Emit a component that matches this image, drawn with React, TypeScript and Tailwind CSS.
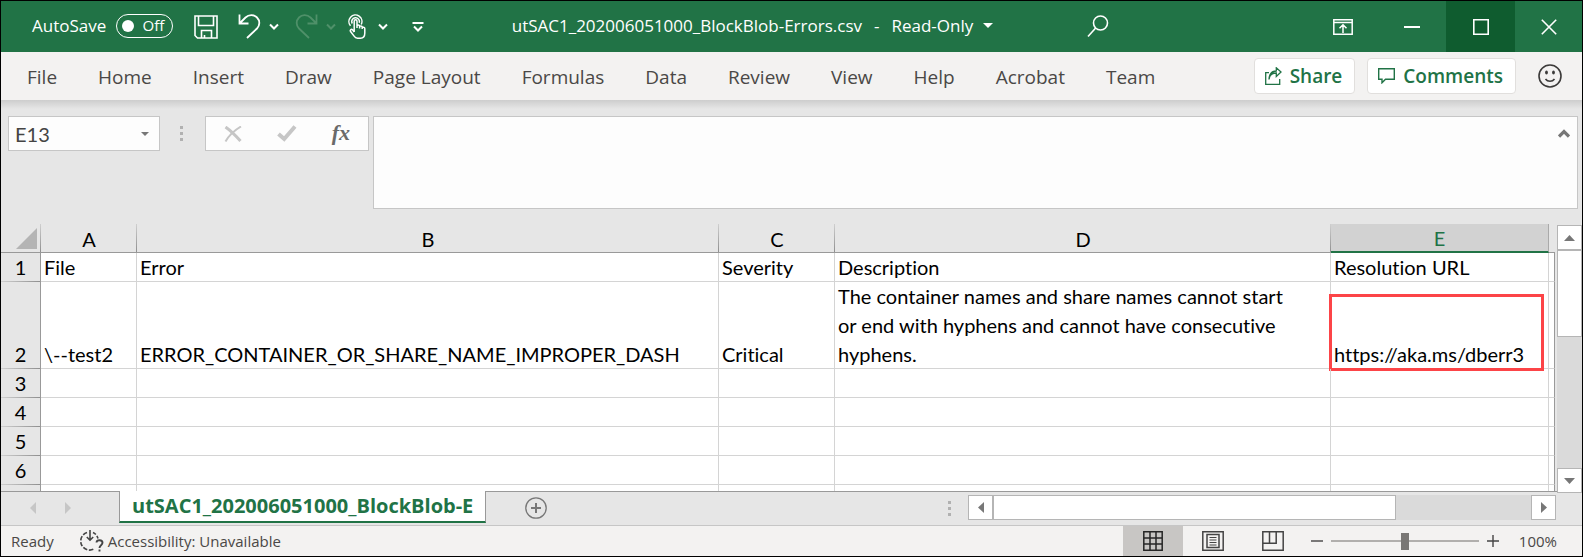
import type { ReactNode } from 'react';

const menuTabs = ['File', 'Home', 'Insert', 'Draw', 'Page Layout', 'Formulas', 'Data', 'Review', 'View', 'Help', 'Acrobat', 'Team'];

const rows = [
  { n: '1', cells: ['File', 'Error', 'Severity', 'Description', 'Resolution URL'] },
  {
    n: '2',
    cells: [
      '\\--test2',
      'ERROR_CONTAINER_OR_SHARE_NAME_IMPROPER_DASH',
      'Critical',
      'The container names and share names cannot start or end with hyphens and cannot have consecutive hyphens.',
      'https://aka.ms/dberr3',
    ],
  },
  { n: '3', cells: ['', '', '', '', ''] },
  { n: '4', cells: ['', '', '', '', ''] },
  { n: '5', cells: ['', '', '', '', ''] },
  { n: '6', cells: ['', '', '', '', ''] },
  { n: '', cells: ['', '', '', '', ''] },
];

function Chevron({ faded = false }: { faded?: boolean }) {
  return (
    <svg width="10" height="8" viewBox="0 0 10 8" fill="none" stroke={faded ? '#4f9069' : '#fff'} strokeWidth="2">
      <path d="M1 1.5l4 4 4-4" />
    </svg>
  );
}

function Dots() {
  return (
    <svg width="3" height="15" viewBox="0 0 3 15" fill="#b1b1b1">
      <path d="M0 0h3v3H0zM0 6h3v3H0zM0 12h3v3H0z" />
    </svg>
  );
}

function WindowButton({ label, className = 'w-[69px]', children }: { label: string; className?: string; children: ReactNode }) {
  return (
    <button aria-label={label} className={`flex items-center justify-center self-stretch ${className}`}>
      {children}
    </button>
  );
}

function TitleBar() {
  return (
    <header className="flex h-[51px] shrink-0 items-center bg-[#217346] text-[17px] text-white">
      <div className="flex flex-1 items-center">
        <div className="flex items-center gap-2.5 pb-0.5 pl-[31px]">
          <span id="autosave">AutoSave</span>
          <button
            role="switch"
            aria-checked="false"
            aria-labelledby="autosave"
            className="flex h-6 w-[57px] items-center justify-between rounded-full border border-white pr-2 pl-[5px] text-[15px]"
          >
            <span className="size-3 rounded-full bg-white" />
            Off
          </button>
        </div>
        <button aria-label="Save" className="ml-[21px]">
          <svg width="24" height="24" viewBox="0 0 24 24" fill="none" stroke="#fff" strokeWidth="1.600">
            <path d="M1 1h22v22H3.500L1 20.500zM4.500 1v9.500h15V1M7.500 23v-7.500h10V23M10.500 23v-3" />
          </svg>
        </button>
        <button aria-label="Undo" className="ml-5">
          <svg width="23" height="25" viewBox="0 0 23 25" fill="none" stroke="#fff" strokeWidth="1.800">
            <path d="M1.500.5v9h9M2 9l5.500-5.500c3.500-3.300 8.500-3 11.500 0 3.200 3.300 3 8 0 11L9 24" />
          </svg>
        </button>
        <button aria-label="Undo history" className="ml-2"><Chevron /></button>
        <button aria-label="Redo" className="ml-4">
          <svg width="23" height="25" viewBox="0 0 23 25" fill="none" stroke="#4f9069" strokeWidth="1.800">
            <path d="M21.500.5v9h-9M21 9l-5.500-5.500c-3.500-3.300-8.500-3-11.500 0-3.200 3.300-3 8 0 11L14 24" />
          </svg>
        </button>
        <button aria-label="Redo history" className="ml-2"><Chevron faded /></button>
        <button aria-label="Touch mode" className="ml-3">
          <svg width="18" height="25" viewBox="0 0 18 25" fill="none" stroke="#fff" strokeWidth="1.500">
            <path d="M2.500 11.800A6.500 6.500 0 1 1 13.200 10.500M4.300 9.500a3.800 3.800 0 1 1 6.900-.8" />
            <path d="M6.200 18V7.300c0-2 2.800-2 2.800 0V14M9 12c0-1.400 2.600-1.400 2.600 0v2.500M11.600 13c0-1.400 2.600-1.300 2.600 0v2M14.200 13.800c.4-1 2.600-.8 2.600.6V19c0 3-1.600 5.200-4.300 5.200H9.500c-1.800 0-2.600-.8-3.600-2.300l-3.500-4.600c-.7-1.500 1-2.600 2.200-1.400L6.200 18" />
          </svg>
        </button>
        <button aria-label="Touch mode options" className="ml-3"><Chevron /></button>
        <button aria-label="Customize Quick Access Toolbar" className="ml-6">
          <svg width="12" height="10" viewBox="0 0 12 10" fill="none" stroke="#fff" strokeWidth="2">
            <path d="M.5 1h11M2 4.500l4 4 4-4" />
          </svg>
        </button>
      </div>
      <div className="flex items-center gap-3 pb-0.5">
        <span>utSAC1_202006051000_BlockBlob-Errors.csv</span>
        <span>-</span>
        <button className="flex items-center gap-2.5">
          Read-Only
          <svg width="10" height="5" viewBox="0 0 10 5" fill="#fff"><path d="M0 0h10L5 5z" /></svg>
        </button>
      </div>
      <div className="flex flex-1 items-center self-stretch pl-[78px]">
        <button aria-label="Search" className="mr-auto ml-4">
          <svg width="22" height="23" viewBox="0 0 22 23" fill="none" stroke="#fff" strokeWidth="1.600">
            <circle cx="13.500" cy="8" r="7" />
            <path d="M8.700 13L1 21.500" />
          </svg>
        </button>
        <WindowButton label="Ribbon Display Options">
          <svg width="20" height="16" viewBox="0 0 20 16" fill="none" stroke="#fff" strokeWidth="1.500">
            <path d="M.8.800h18.400v14.400H.8zM.8 3.500h18.400M10 14V6M6.500 9.200L10 5.700l3.500 3.500" />
          </svg>
        </WindowButton>
        <WindowButton label="Minimize">
          <svg width="16" height="2" viewBox="0 0 16 2" fill="#fff"><path d="M0 0h16v2H0z" /></svg>
        </WindowButton>
        <WindowButton label="Maximize" className="w-[69px] bg-[#0f5c2f]">
          <svg width="16" height="16" viewBox="0 0 16 16" fill="none" stroke="#fff" strokeWidth="1.600"><path d="M.8.800h14.400v14.400H.8z" /></svg>
        </WindowButton>
        <WindowButton label="Close" className="w-[67px]">
          <svg width="16" height="16" viewBox="0 0 16 16" stroke="#fff" strokeWidth="1.600"><path d="M.8.800l14.400 14.400M15.200.800L.8 15.200" /></svg>
        </WindowButton>
      </div>
    </header>
  );
}

function Ribbon() {
  return (
    <nav className="flex h-12 shrink-0 items-center bg-[#f3f2f1] pr-5 pl-[26px] text-[19px] text-[#4a4846]">
      <div className="flex gap-[41px] pt-0.5 whitespace-nowrap">
        {menuTabs.map((t) => (
          <button key={t}>{t}</button>
        ))}
      </div>
      <div className="ml-auto flex items-center gap-3 font-semibold text-[#217346]">
        <button className="flex h-9 items-center gap-2 rounded-sm border border-[#e1dfdd] bg-white pr-3 pl-2.5">
          <svg width="17" height="18" viewBox="0 0 17 18" fill="none" stroke="#217346" strokeWidth="1.300">
            <path d="M4 5.700H.7v11.600h14V12M4 12.500c.3-4.500 3-6.500 7.300-6.500v3.500L16 5l-4.700-4.200V4C6.500 4.200 4.200 7 4 12.500z" />
          </svg>
          Share
        </button>
        <button className="flex h-9 items-center gap-2 rounded-sm border border-[#e1dfdd] bg-white pr-3 pl-2.5">
          <svg width="17" height="16" viewBox="0 0 17 16" fill="none" stroke="#217346" strokeWidth="1.400">
            <path d="M.7.700h15.600v10.600H7.500L4 14.800v-3.500H.7z" />
          </svg>
          Comments
        </button>
        <button aria-label="Feedback" className="ml-2.5">
          <svg width="24" height="24" viewBox="0 0 24 24" fill="none" stroke="#3b3a39" strokeWidth="1.600">
            <circle cx="12" cy="12" r="11" />
            <path d="M7.500 15c2.200 3 6.800 3 9 0" />
            <ellipse cx="8.500" cy="8.500" rx="1.400" ry="2" fill="#3b3a39" stroke="none" />
            <ellipse cx="15.500" cy="8.500" rx="1.400" ry="2" fill="#3b3a39" stroke="none" />
          </svg>
        </button>
      </div>
    </nav>
  );
}

function FormulaBar() {
  return (
    <div className="flex shrink-0 items-start bg-[linear-gradient(to_bottom,#cdcdcd,#e6e6e6_9px)] pt-4 pr-1 pb-[15px] pl-[7px]">
      <div className="flex h-[35px] w-[152px] items-center border border-[#c6c6c6] bg-[#fdfdfd] pr-2.5 pl-1.5">
        <input aria-label="Name Box" defaultValue="E13" className="w-full min-w-0 bg-transparent font-[Lato,sans-serif] text-xl text-[#444] outline-none" />
        <button aria-label="Name Box list">
          <svg width="8" height="4" viewBox="0 0 8 4" fill="#777"><path d="M0 0h8L4 4z" /></svg>
        </button>
      </div>
      <div className="flex h-[35px] w-[43px] items-center justify-center"><Dots /></div>
      <div className="ml-0.5 flex h-[35px] w-[164px] items-center justify-between border border-[#c6c6c6] bg-[#fdfdfd] px-[18px]">
        <button aria-label="Cancel">
          <svg width="18" height="16" viewBox="0 0 18 16" fill="none" stroke="#c6c6c6">
            <path d="M1.500 1c5 3.500 10.500 9 15 14" strokeWidth="3" />
            <path d="M17 .5C11 4 5 9.500 1.500 15.500" strokeWidth="2" />
          </svg>
        </button>
        <button aria-label="Enter">
          <svg width="20" height="17" viewBox="0 0 20 17" fill="none" stroke="#c6c6c6" strokeWidth="4">
            <path d="M1.500 9l5.700 5L18 1.500" />
          </svg>
        </button>
        <button aria-label="Insert Function" className="pb-0.5 font-['Liberation_Serif',serif] text-[22px] leading-6 font-bold text-[#6a6a6a] italic">
          fx
        </button>
      </div>
      <div className="ml-1 flex h-[93px] flex-1 items-start border border-[#c6c6c6] bg-[#fdfdfd]">
        <textarea aria-label="Formula Bar" className="h-full flex-1 resize-none bg-transparent outline-none" />
        <button aria-label="Collapse Formula Bar" className="mt-3 mr-[7px]">
          <svg width="12" height="9" viewBox="0 0 12 9" fill="none" stroke="#777" strokeWidth="3.200"><path d="M1 7.500l5-5 5 5" /></svg>
        </button>
      </div>
    </div>
  );
}

const columnHead = 'bg-[linear-gradient(to_bottom,#cfcfcf,#8f8f8f)] bg-[length:1px_100%] bg-right bg-no-repeat';
const rowHead = 'bg-[linear-gradient(to_right,#d0d0d0,#8f8f8f)] bg-[length:100%_1px] bg-bottom bg-no-repeat';

function Sheet() {
  return (
    <div className="flex min-h-0 flex-1">
      <div className="min-w-0 flex-1 overflow-hidden">
        <table className="w-full table-fixed border-separate border-spacing-0 font-[Lato,sans-serif] text-xl text-black [font-variant-ligatures:none]">
          <colgroup>
            <col className="w-10" />
            <col className="w-24" />
            <col className="w-[582px]" />
            <col className="w-[116px]" />
            <col />
            <col className="w-[218px]" />
            <col className="w-[6px]" />
          </colgroup>
          <thead>
            <tr className="h-[29px] leading-[25px]">
              <th className={`border-b border-[#999] p-0 ${columnHead}`}>
                <svg width="21" height="21" viewBox="0 0 21 21" className="mr-1 ml-auto" fill="#b4b4b4"><path d="M21 0v21H0z" /></svg>
              </th>
              {['A', 'B', 'C', 'D'].map((c) => (
                <th key={c} scope="col" className={`border-b border-[#999] p-0 pt-0.5 font-normal ${columnHead}`}>{c}</th>
              ))}
              <th scope="col" className="border-r border-b-2 border-r-[#aaa] border-b-[#217346] bg-[#d2d2d2] p-0 pt-0.5 font-normal text-[#217346]">E</th>
              <td className="border-b border-[#999] p-0" />
            </tr>
          </thead>
          <tbody>
            {rows.map((r, k) => (
              <tr key={k} className="h-[29px] bg-white align-bottom">
                <th scope="row" className={`border-r border-[#999] bg-[#e6e6e6] p-0 pb-px leading-7 font-normal ${rowHead}`}>{r.n}</th>
                {r.cells.map((text, i) => (
                  <td key={i} className="relative border-r border-b border-[#d4d4d4] py-0 pr-0 pl-[3px] leading-7">
                    {i === 3 && k === 1 ? <p className="-mb-px pr-8 leading-[29px]">{text}</p> : text}
                    {i === 4 && k === 1 && (
                      <span className="pointer-events-none absolute top-3 right-1 -bottom-[3px] -left-0.5 border-3 border-[#fc4447]" />
                    )}
                  </td>
                ))}
                <td className="border-r border-b border-r-[#999] border-b-[#d4d4d4] p-0" />
              </tr>
            ))}
          </tbody>
        </table>
      </div>
      <div className="relative mt-px -mb-0.5 ml-0.5 flex w-[25px] flex-col bg-[#dadada]">
        <button aria-label="Scroll up" className="flex h-[25px] items-center justify-center border border-[#b5b5b5] bg-white">
          <svg width="11" height="6" viewBox="0 0 11 6" fill="#777"><path d="M5.500 0L11 6H0z" /></svg>
        </button>
        <div className="h-[87px] border border-[#b5b5b5] bg-white" />
        <button aria-label="Scroll down" className="mt-auto flex h-[25px] items-center justify-center border border-[#b5b5b5] bg-white">
          <svg width="11" height="6" viewBox="0 0 11 6" fill="#777"><path d="M0 0h11L5.500 6z" /></svg>
        </button>
      </div>
    </div>
  );
}

function SheetBar() {
  return (
    <div className="flex h-[35px] shrink-0 items-start border-t border-b border-t-[#999] border-b-[#c6c6c6]">
      <div className="flex h-8 w-[118px] items-center gap-[29px] pl-[29px]">
        <button aria-label="Previous sheet"><svg width="6" height="12" viewBox="0 0 6 12" fill="#c6c6c6"><path d="M6 0v12L0 6z" /></svg></button>
        <button aria-label="Next sheet"><svg width="6" height="12" viewBox="0 0 6 12" fill="#c6c6c6"><path d="M0 0v12l6-6z" /></svg></button>
      </div>
      <button className="-mt-px flex h-8 items-center border-x border-b-2 border-x-[#999] border-b-[#217346] bg-white px-3 text-xl font-bold text-[#217346]">
        utSAC1_202006051000_BlockBlob-E
      </button>
      <button aria-label="New sheet" className="mt-[5px] ml-[39px]">
        <svg width="22" height="22" viewBox="0 0 22 22" fill="none" stroke="#777" strokeWidth="1.300">
          <circle cx="11" cy="11" r="10.200" />
          <path d="M6 11h10M11 6v10" strokeWidth="2" />
        </svg>
      </button>
      <div className="mr-[17px] ml-auto flex h-8 items-center"><Dots /></div>
      <div className="mt-[3px] mr-[26px] flex h-[25px] w-[588px] bg-[#dadada]">
        <button aria-label="Scroll left" className="flex w-[25px] items-center justify-center border border-[#b5b5b5] bg-white">
          <svg width="6" height="11" viewBox="0 0 6 11" fill="#777"><path d="M6 0v11L0 5.500z" /></svg>
        </button>
        <div className="w-[403px] border border-[#b5b5b5] bg-white" />
        <button aria-label="Scroll right" className="ml-auto flex w-[25px] items-center justify-center border border-[#b5b5b5] bg-white">
          <svg width="6" height="11" viewBox="0 0 6 11" fill="#777"><path d="M0 0v11l6-5.500z" /></svg>
        </button>
      </div>
    </div>
  );
}

function StatusBar() {
  return (
    <footer className="flex h-[30px] shrink-0 items-center bg-[#f3f2f1] pr-[25px] pl-2.5 text-[15px] text-[#4a4846]">
      <span>Ready</span>
      <button className="ml-[26px] flex items-center gap-1">
        <svg width="24" height="22" viewBox="0 0 24 22" fill="none" stroke="#444" strokeWidth="1.600">
          <path d="M7 2.500A9 9 0 1 0 14 19" strokeDasharray="4.500 1.600" />
          <path d="M13 2.500a9 9 0 0 1 5 6" strokeDasharray="3.500 1.600" />
          <path d="M10 0v10M6.800 7l3.200 3.200L13.200 7" />
          <path d="M16.500 12.500c.3-3 6-3 6 .3 0 2.500-3 2.400-3 5.200M19.500 19.500v2" strokeWidth="1.900" />
        </svg>
        Accessibility: Unavailable
      </button>
      <div className="ml-auto flex self-stretch">
        <button aria-label="Normal view" className="flex w-[60px] items-center justify-center bg-[#c8c6c4]">
          <svg width="20" height="20" viewBox="0 0 20 20" fill="none" stroke="#262626" strokeWidth="1.500">
            <path d="M.8.800h18.400v18.400H.8zM.8 7h18.400M.8 13h18.400M7 .8v18.400M13 .8v18.400" />
          </svg>
        </button>
        <button aria-label="Page layout view" className="flex w-[60px] items-center justify-center">
          <svg width="22" height="20" viewBox="0 0 22 20" fill="none" stroke="#444" strokeWidth="1.500">
            <path d="M.8.800h20.400v18.400H.8zM5 3.500h12v13H5z" />
            <path d="M7.500 6.500h7M7.500 9h7M7.500 11.500h7M7.500 14h7" strokeWidth="1.200" />
          </svg>
        </button>
        <button aria-label="Page break preview" className="flex w-[60px] items-center justify-center">
          <svg width="22" height="20" viewBox="0 0 22 20" fill="none" stroke="#444" strokeWidth="1.500">
            <path d="M.8.800h20.400v18.400H.8zM.8 12.200h13.400V.8M7.500.800v11.400" />
          </svg>
        </button>
      </div>
      <button aria-label="Zoom out" className="ml-2">
        <svg width="12" height="12" viewBox="0 0 12 12" stroke="#444" strokeWidth="1.400"><path d="M0 6h12" /></svg>
      </button>
      <input
        type="range"
        aria-label="Zoom"
        defaultValue={50}
        className="mx-2 h-[18px] w-[148px] appearance-none bg-[linear-gradient(#b1afad,#b1afad)] bg-[length:100%_2px] bg-center bg-no-repeat [&::-webkit-slider-thumb]:h-[17px] [&::-webkit-slider-thumb]:w-2 [&::-webkit-slider-thumb]:appearance-none [&::-webkit-slider-thumb]:bg-[#797775]"
      />
      <button aria-label="Zoom in">
        <svg width="12" height="12" viewBox="0 0 12 12" stroke="#444" strokeWidth="1.400"><path d="M0 6h12M6 0v12" /></svg>
      </button>
      <button className="ml-5">100%</button>
    </footer>
  );
}

export default function App() {
  return (
    <div className="flex h-screen flex-col overflow-hidden border border-black bg-[#e6e6e6] font-['Open_Sans',sans-serif]">
      <TitleBar />
      <Ribbon />
      <FormulaBar />
      <Sheet />
      <SheetBar />
      <StatusBar />
    </div>
  );
}
